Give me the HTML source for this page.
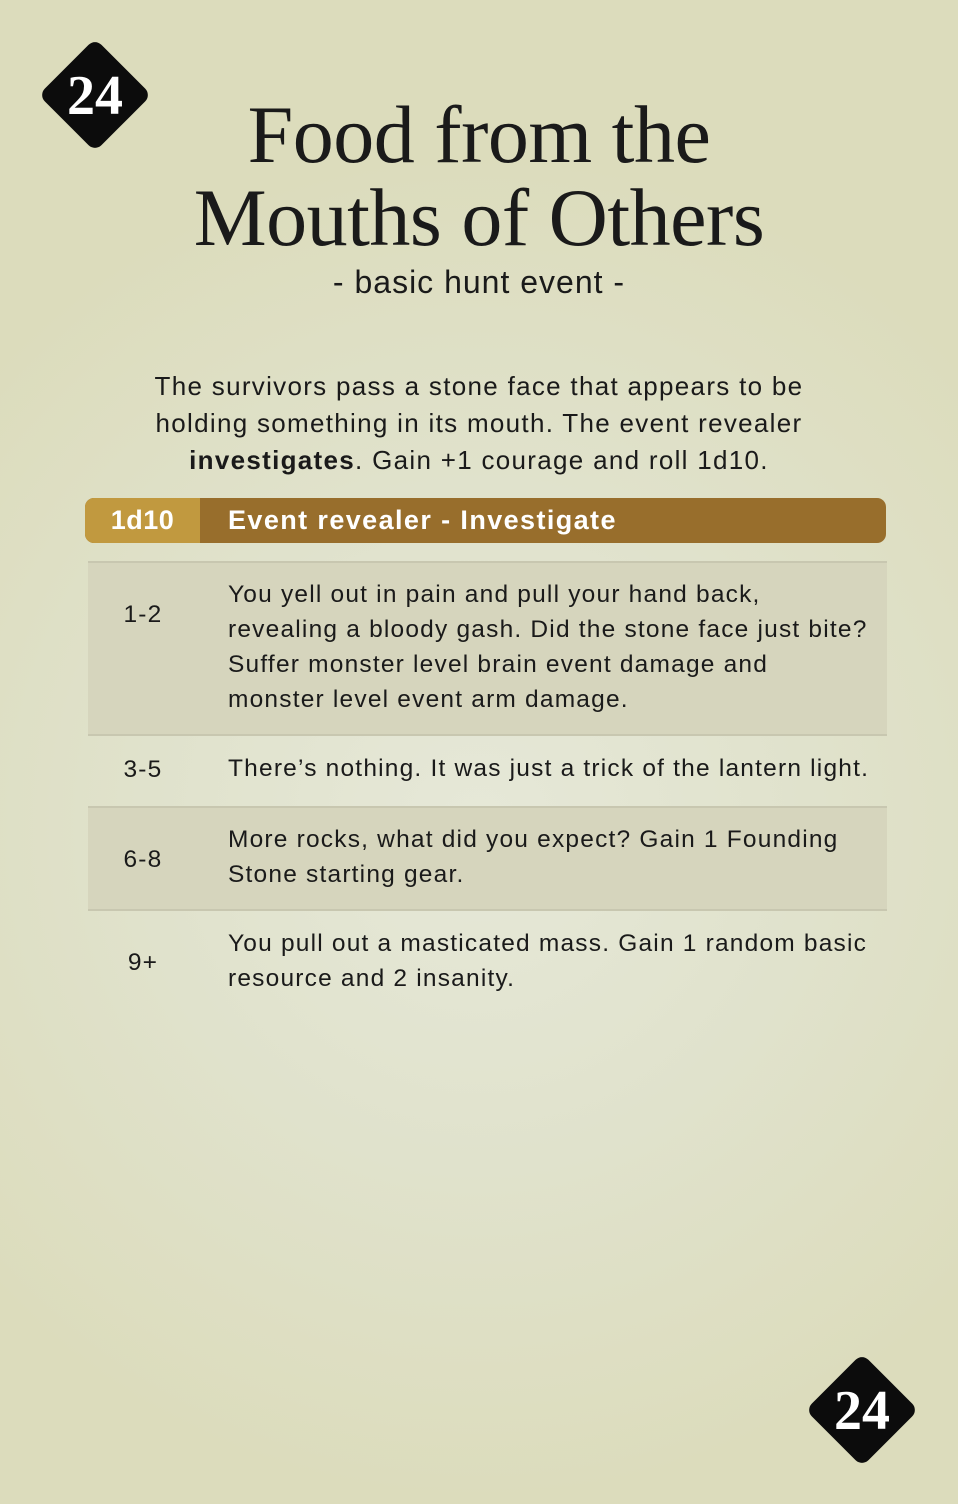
<!DOCTYPE html>
<html><head><meta charset="utf-8"><style>
html,body{margin:0;padding:0}
body{width:958px;height:1504px;position:relative;overflow:hidden;
background:radial-gradient(ellipse 70% 45% at 50% 55%,#e6e8d8 0%,#e0e2cc 50%,#dcdcbc 100%);
font-family:"Liberation Sans",sans-serif;color:#1a1a1a}
.dia{position:absolute;width:80px;height:80px;background:#0c0c0c;border-radius:9px;transform:rotate(45deg)}
.num{position:absolute;width:114px;text-align:center;font-family:"Liberation Serif",serif;color:#fff;font-size:56px;line-height:1;font-weight:bold}
.title{position:absolute;left:0;width:958px;text-align:center;font-family:"Liberation Serif",serif;font-size:82px;line-height:83px;top:93px;letter-spacing:-0.5px}
.sub{position:absolute;left:0;width:958px;text-align:center;top:264px;font-size:32px;letter-spacing:1px}
.intro{position:absolute;left:0;width:958px;text-align:center;top:368px;font-size:26px;line-height:37px;white-space:nowrap;letter-spacing:1.3px}
.hdr{position:absolute;left:85px;top:498px;width:801px;height:45px;border-radius:9px;background:#986e2c;overflow:hidden;color:#fff;font-weight:bold;font-size:27px}
.hdr .a{position:absolute;left:0;top:0;width:115px;height:45px;background:#c1993f;text-align:center;line-height:45px;letter-spacing:0.5px}
.hdr .b{position:absolute;left:143px;line-height:45px;letter-spacing:1.4px}
.row{position:absolute;left:88px;width:799px;font-size:24.5px;line-height:35px;white-space:nowrap;letter-spacing:1.2px}
.row.s{background:#d6d5bd;border-top:2px solid #c8c7b0;border-bottom:2px solid #c8c7b0}
.row .n{position:absolute;left:0;width:110px;text-align:center}
.row .t{position:absolute;left:140px;width:655px}
</style></head><body>
<div class="dia" style="left:55px;top:55px"></div>
<div class="num" style="left:38px;top:68px">24</div>
<div class="dia" style="left:822px;top:1370px"></div>
<div class="num" style="left:805px;top:1383px">24</div>
<div class="title">Food from the<br>Mouths of Others</div>
<div class="sub">- basic hunt event -</div>
<div class="intro">The survivors pass a stone face that appears to be<br>holding something in its mouth. The event revealer<br><b>investigates</b>. Gain +1 courage and roll 1d10.</div>
<div class="hdr"><div class="a">1d10</div><div class="b">Event revealer - Investigate</div></div>
<div class="row s" style="top:561px;height:171px"><div class="n" style="top:34px">1-2</div><div class="t" style="top:14px">You yell out in pain and pull your hand back,<br>revealing a bloody gash. Did the stone face just bite?<br>Suffer monster level brain event damage and<br>monster level event arm damage.</div></div>
<div class="row" style="top:735px;height:71px"><div class="n" style="top:17px">3-5</div><div class="t" style="top:16px">There’s nothing. It was just a trick of the lantern light.</div></div>
<div class="row s" style="top:806px;height:101px"><div class="n" style="top:34px">6-8</div><div class="t" style="top:14px">More rocks, what did you expect? Gain 1 Founding<br>Stone starting gear.</div></div>
<div class="row" style="top:910px;height:100px"><div class="n" style="top:35px">9+</div><div class="t" style="top:16px">You pull out a masticated mass. Gain 1 random basic<br>resource and 2 insanity.</div></div>
</body></html>
